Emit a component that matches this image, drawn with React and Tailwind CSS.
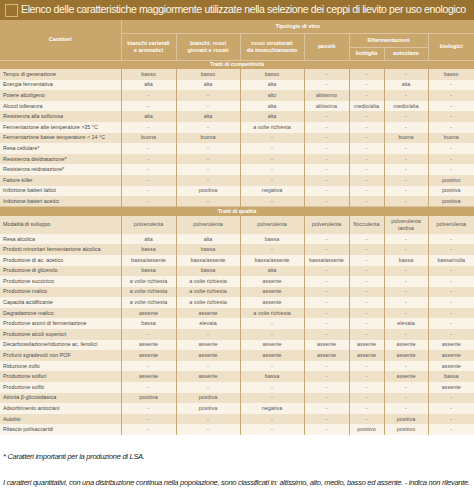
import React from 'react';

var COLS = [121, 55, 64, 64, 45, 35, 44, 46];

var COMPETITIVITA = [
  ['Tempo di generazione', 'basso', 'basso', 'basso', '-', '-', '-', 'basso'],
  ['Energia fermentativa', 'alta', 'alta', 'alta', '-', '-', 'alta', '-'],
  ['Potere alcoligeno', '-', '-', 'alto', 'altissimo', '-', '-', '-'],
  ['Alcool tolleranza', '-', '-', 'alta', 'altissima', 'medio/alta', 'medio/alta', '-'],
  ['Resistenza alla solforosa', 'alta', 'alta', 'alta', '-', '-', '-', '-'],
  ['Fermentazione alte temperature >35 °C', '-', '-', 'a volte richiesta', '-', '-', '-', '-'],
  ['Fermentazione basse temperature < 14 °C', 'buona', 'buona', '-', '-', '-', 'buona', 'buona'],
  ['Resa cellulare*', '-', '-', '-', '-', '-', '-', '-'],
  ['Resistenza disidratazione*', '-', '-', '-', '-', '-', '-', '-'],
  ['Resistenza reidratazione*', '-', '-', '-', '-', '-', '-', '-'],
  ['Fattore killer', '-', '-', '-', '-', '-', '-', 'positivo'],
  ['Inibizione batteri lattici', '-', 'positiva', 'negativa', '-', '-', '-', 'positiva'],
  ['Inibizione batteri acetici', '-', '-', '-', '-', '-', '-', 'positiva'],
];

var QUALITA = [
  ['Resa alcolica', 'alta', 'alta', 'bassa', '-', '-', '-', '-'],
  ['Prodotti minoritari fermentazione alcolica', 'bassa', 'bassa', '-', '-', '-', '-', '-'],
  ['Produzione di ac. acetico', 'bassa/assente', 'bassa/assente', 'bassa/assente', 'bassa/assente', '-', 'bassa', 'bassa/nulla'],
  ['Produzione di glicerolo', 'bassa', 'bassa', 'alta', '-', '-', '-', '-'],
  ['Produzione succinico', 'a volte richiesta', 'a volte richiesta', 'assente', '-', '-', '-', '-'],
  ['Produzione malico', 'a volte richiesta', 'a volte richiesta', 'assente', '-', '-', '-', '-'],
  ['Capacità acidificante', 'a volte richiesta', 'a volte richiesta', 'assente', '-', '-', '-', '-'],
  ['Degradazione malico', 'assente', 'assente', 'a volte richiesta', '-', '-', '-', '-'],
  ['Produzione aromi di fermentazione', 'bassa', 'elevata', '-', '-', '-', 'elevata', '-'],
  ['Produzione alcoli superiori', '-', '-', '-', '-', '-', '-', '-'],
  ['Decarbossilazione/riduzione ac. fenolici', 'assente', 'assente', 'assente', 'assente', 'assente', 'assente', 'assente'],
  ['Profumi sgradevoli non POF', 'assente', 'assente', 'assente', 'assente', 'assente', 'assente', 'assente'],
  ['Riduzione zolfo', '-', '-', '-', '-', '-', '-', 'assente'],
  ['Produzione solfuri', 'assente', 'assente', 'bassa', '-', '-', 'assente', 'bassa'],
  ['Produzione solfiti', '-', '-', '-', '-', '-', '-', 'assente'],
  ['Attività β-glicosidasica', 'positiva', 'positiva', '-', '-', '-', '-', '-'],
  ['Adsorbimento antociani', '-', 'positiva', 'negativa', '-', '-', '-', '-'],
  ['Autolisi', '-', '-', '-', '-', '-', 'positiva', '-'],
  ['Rilascio polisaccaridi', '-', '-', '-', '-', 'positivo', 'positivo', '-'],
];

function DataRow({ row, dark }) {
  return (
    <tr className={'h-[10.6px] ' + (dark ? 'bg-[#efe1c8]' : 'bg-[#faf3e7]')}>
      {row.map(function(cell, i) {
        if (i === 0) {
          return (
            <td key={i} className="p-0 pl-[3px] text-left text-[#4a4a4a] whitespace-nowrap border-r border-[#c5a877]">
              {cell}
            </td>
          );
        }
        return (
          <td key={i} className={'p-0 text-center text-[#5a5a5a] whitespace-nowrap' + (i < 7 ? ' border-r border-[#c5a877]' : '')}>
            {cell}
          </td>
        );
      })}
    </tr>
  );
}

function SectionBar({ label }) {
  return (
    <tr className="h-[9px] bg-[#c9a66c]">
      <td colSpan={8} className="p-0 text-center text-white font-bold border-t border-[#dcc59c]">
        {label}
      </td>
    </tr>
  );
}

export default function App() {
  return (
    <div className="w-[474px] h-[493px] bg-white overflow-hidden font-['Liberation_Sans',Arial,sans-serif]">
      {/* Title */}
      <div className="h-[20px] bg-[#9a7331] flex items-center">
        <div className="ml-[5px] w-[13px] h-[13px] border border-[#d6b47a]" />
        <span className="ml-[3px] text-[10.6px] text-[#fff8ec] whitespace-nowrap tracking-[-0.4px]">
          Elenco delle caratteristiche maggiormente utilizzate nella selezione dei ceppi di lievito per uso enologico
        </span>
      </div>

      {/* Table */}
      <table className="table-fixed border-collapse w-[474px] text-[5.4px] leading-[7px]">
        <colgroup>
          {COLS.map(function(w, i) {
            return <col key={i} style={{ width: w + 'px' }} />;
          })}
        </colgroup>
        <thead className="bg-[#c9a66c] text-white font-bold text-[5.6px]">
          <tr className="h-[13px]">
            <th rowSpan={3} className="p-0 border-r border-[#dcc59c] font-bold">Caratteri</th>
            <th colSpan={7} className="p-0 font-bold border-b border-[#dcc59c]">Tipologie di vino</th>
          </tr>
          <tr className="h-[14px]">
            <th rowSpan={2} className="p-0 border-r border-[#dcc59c] font-bold">bianchi varietali<br />e aromatici</th>
            <th rowSpan={2} className="p-0 border-r border-[#dcc59c] font-bold">bianchi, rossi<br />giovani e rosati</th>
            <th rowSpan={2} className="p-0 border-r border-[#dcc59c] font-bold">rossi strutturati<br />da invecchiamento</th>
            <th rowSpan={2} className="p-0 border-r border-[#dcc59c] font-bold">passiti</th>
            <th colSpan={2} className="p-0 border-r border-b border-[#dcc59c] font-bold">Rifermentazioni</th>
            <th rowSpan={2} className="p-0 font-bold">biologici</th>
          </tr>
          <tr className="h-[13px]">
            <th className="p-0 border-r border-[#dcc59c] font-bold">bottiglia</th>
            <th className="p-0 border-r border-[#dcc59c] font-bold">autoclave</th>
          </tr>
        </thead>
        <tbody>
          <SectionBar label="Tratti di competitività" />
          {COMPETITIVITA.map(function(row, i) {
            return <DataRow key={i} row={row} dark={i % 2 === 0} />;
          })}
          <SectionBar label="Tratti di qualità" />
          <tr className="h-[18px] bg-[#efe1c8]">
            <td className="p-0 pl-[3px] text-left text-[#4a4a4a] border-r border-[#c5a877]">Modalità di sviluppo</td>
            <td className="p-0 text-center text-[#5a5a5a] border-r border-[#c5a877]">polverulenta</td>
            <td className="p-0 text-center text-[#5a5a5a] border-r border-[#c5a877]">polverulenta</td>
            <td className="p-0 text-center text-[#5a5a5a] border-r border-[#c5a877]">polverulenta</td>
            <td className="p-0 text-center text-[#5a5a5a] border-r border-[#c5a877]">polverulenta</td>
            <td className="p-0 text-center text-[#5a5a5a] border-r border-[#c5a877]">flocculenta</td>
            <td className="p-0 text-center text-[#5a5a5a] border-r border-[#c5a877]">polverulenta<br />tardiva</td>
            <td className="p-0 text-center text-[#5a5a5a]">polverulenta</td>
          </tr>
          {QUALITA.map(function(row, i) {
            return <DataRow key={i} row={row} dark={i % 2 === 1} />;
          })}
        </tbody>
      </table>

      {/* Notes */}
      <div className="mt-[17px] pl-[3px] italic text-[#1c1c1c] text-[7.55px] leading-[10px] tracking-[-0.3px] whitespace-nowrap">
        <p>* Caratteri importanti per la produzione di LSA.</p>
        <p className="mt-[16px]">
          I caratteri quantitativi, con una distribuzione continua nella popolazione, sono classificati in: altissimo, alto, medio, basso ed assente. - indica non rilevante.
        </p>
      </div>
    </div>
  );
}
